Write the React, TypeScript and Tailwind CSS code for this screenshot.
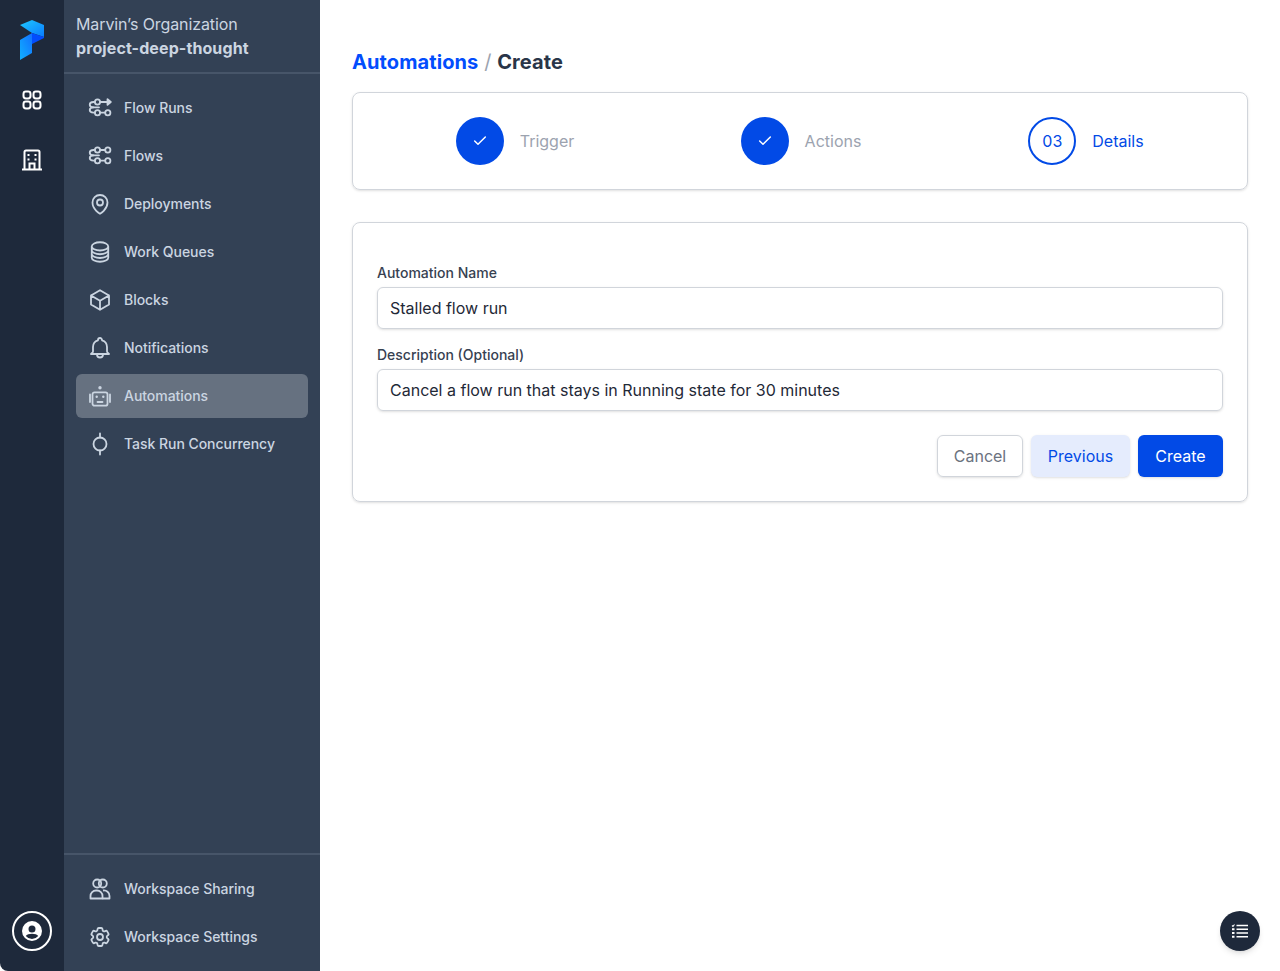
import { Check } from 'lucide-react'
import { HiOutlineCircleStack, HiOutlineCog6Tooth, HiOutlineCube, HiOutlineMapPin } from 'react-icons/hi2'
import { ReactNode } from 'react'

function FlowIcon({ arrow }: { arrow?: boolean }) {
  return (
    <svg viewBox="0 0 24 24" fill="none" stroke="currentColor" strokeWidth="1.800" strokeLinecap="round" strokeLinejoin="round" className="w-6 h-6">
      <circle cx="9.500" cy="6" r="2.600" />
      <circle cx="9.500" cy="16.700" r="2.600" />
      <circle cx="19.800" cy="16.700" r="2.600" />
      <path d="M12.100 16.700h5.100" />
      {arrow ? (
        <>
          <path d="M12.100 6h8" />
          <path d="M19.500 3.200 22.800 6l-3.300 2.800z" fill="currentColor" />
        </>
      ) : (
        <>
          <circle cx="19.800" cy="6" r="2.600" />
          <path d="M12.100 6h5.100" />
        </>
      )}
      <path d="M6.900 6H5.500a4 2.680 0 0 0 0 5.350h5.500" />
      <path d="M5.500 11.350a4 2.680 0 0 0 0 5.350h1.400" />
    </svg>
  )
}

function BellIcon() {
  return (
    <svg viewBox="0 0 24 24" fill="none" stroke="currentColor" strokeWidth="1.800" strokeLinecap="round" strokeLinejoin="round" className="w-6 h-6">
      <path d="M15 18h6l-1.400-1.400A2 2 0 0 1 19 15.200V11a7 7 0 0 0-5-6.660V4a2 2 0 1 0-4 0v.340A7 7 0 0 0 5 11v4.200c0 .540-.210 1.050-.600 1.400L3 18h12zm0 0v.500a3 3 0 1 1-6 0V18" />
    </svg>
  )
}

function BotIcon() {
  return (
    <svg viewBox="0 0 24 24" fill="none" stroke="currentColor" strokeWidth="1.800" strokeLinecap="round" className="w-6 h-6">
      <circle cx="12" cy="3.700" r="1.700" fill="currentColor" stroke="none" />
      <rect x="4.500" y="8.300" width="15" height="13.400" rx="2" />
      <path d="M2 10.500v7.500M22 10.500v7.500" />
      <circle cx="8.700" cy="12.700" r="1.200" fill="currentColor" stroke="none" />
      <circle cx="15.300" cy="12.700" r="1.200" fill="currentColor" stroke="none" />
      <path d="M9.500 18h5" />
    </svg>
  )
}

function ConcurrencyIcon() {
  return (
    <svg viewBox="0 0 24 24" fill="none" stroke="currentColor" strokeWidth="1.800" strokeLinecap="round" className="w-6 h-6">
      <circle cx="12" cy="12" r="6.500" />
      <path d="M12 1.500v4M12 18.500v4" />
    </svg>
  )
}

function SharingIcon() {
  return (
    <svg viewBox="0 0 24 24" fill="none" stroke="currentColor" strokeWidth="1.800" strokeLinejoin="round" className="w-6 h-6">
      <circle cx="9.200" cy="6.500" r="4" />
      <circle cx="14.800" cy="6.500" r="4" />
      <path d="M2.500 21.500V19A5.500 5.500 0 0 1 8 13.500h1A5.500 5.500 0 0 1 14.500 19v2.500z" />
      <path d="M15 13.500A5.500 5.500 0 0 1 21.500 19v2.500h-7" />
    </svg>
  )
}

function Logo() {
  return (
    <svg viewBox="0 0 24 40" className="w-6 h-10">
      <defs>
        <linearGradient id="logoTop" x1="0" y1="0" x2="1" y2="1">
          <stop offset="0" stopColor="#1ec8ff" />
          <stop offset="1" stopColor="#0a7cff" />
        </linearGradient>
        <linearGradient id="logoLeft" x1="0" y1="1" x2="1" y2="0">
          <stop offset="0" stopColor="#10b0ff" />
          <stop offset="1" stopColor="#1270ff" />
        </linearGradient>
      </defs>
      <polygon points="0,5 12,0 24,5 24,17 12,13" fill="url(#logoTop)" />
      <polygon points="0,20 12,13 12,33 0,40" fill="url(#logoLeft)" />
      <polygon points="12,13 24,17 24,18 12,24" fill="#024dfd" />
    </svg>
  )
}

function NavItem({ icon, label, active }: { icon: ReactNode; label: string; active?: boolean }) {
  return (
    <div className={`flex items-center h-11 px-3 gap-3 rounded-md text-sm font-medium tracking-[-0.04px] text-[#cbd5e1] ${active ? 'bg-[#667180]' : ''}`}>
      {icon}
      <span>{label}</span>
    </div>
  )
}

function Step({ label, done }: { label: string; done?: boolean }) {
  return (
    <div className="flex items-center gap-4">
      {done ? (
        <div className="w-12 h-12 rounded-full bg-[#024ae6] flex items-center justify-center text-white">
          <Check className="w-4 h-4" strokeWidth={2.200} />
        </div>
      ) : (
        <div className="w-12 h-12 rounded-full border-2 border-[#024ae6] flex items-center justify-center text-[#024ae6]">03</div>
      )}
      <span className={done ? 'text-[#9ca3af]' : 'text-[#024ae6]'}>{label}</span>
    </div>
  )
}

export default function App() {
  return (
    <div className="flex h-[971px] bg-white text-[#1f2937]" style={{ fontFamily: 'Inter, sans-serif' }}>
      {/* Icon rail */}
      <div className="w-16 shrink-0 bg-[#1e293b] rounded-bl-lg flex flex-col items-center pt-5 pb-5 text-white">
        <Logo />
        <svg viewBox="0 0 24 24" fill="none" stroke="currentColor" strokeWidth="2" className="w-6 h-6 mt-7">
          <rect x="3.500" y="3.500" width="7" height="7" rx="2.400" />
          <rect x="13.500" y="3.500" width="7" height="7" rx="2.400" />
          <rect x="3.500" y="13.500" width="7" height="7" rx="2.400" />
          <rect x="13.500" y="13.500" width="7" height="7" rx="2.400" />
        </svg>
        <svg viewBox="0 0 24 24" fill="none" stroke="currentColor" strokeWidth="2" className="w-6 h-6 mt-9">
          <path d="M4.500 21V4a1.500 1.500 0 0 1 1.500-1.500h12A1.500 1.500 0 0 1 19.500 4v17" />
          <path d="M2 21.500h20" />
          <path d="M9.500 21v-5.500h5V21" />
          <path d="M7.500 7h2M14.500 7h2M7.500 11.500h2M14.500 11.500h2" />
        </svg>
        <div className="mt-auto w-10 h-10 rounded-full border-2 border-white flex items-center justify-center">
          <svg viewBox="0 0 24 24" fill="currentColor" className="w-6 h-6">
            <path fillRule="evenodd" d="M12 2a10 10 0 1 0 0 20 10 10 0 0 0 0-20zm0 4.500a3.500 3.500 0 1 1 0 7 3.500 3.500 0 0 1 0-7zM12 20a8 8 0 0 1-6.200-3c.900-1.500 3.500-2.300 6.200-2.300s5.300.800 6.200 2.300A8 8 0 0 1 12 20z" />
          </svg>
        </div>
      </div>

      {/* Workspace sidebar */}
      <div className="w-64 shrink-0 bg-[#334155] flex flex-col">
        <div className="h-[74px] border-b-2 border-[#475569] px-3 pt-3 text-[#cbd5e1] leading-6">
          <div className="tracking-[-0.1px]">Marvin’s Organization</div>
          <div className="font-bold tracking-[0.1px]">project-deep-thought</div>
        </div>
        <div className="flex flex-col gap-1 px-3 pt-3">
          <NavItem icon={<FlowIcon arrow />} label="Flow Runs" />
          <NavItem icon={<FlowIcon />} label="Flows" />
          <NavItem icon={<HiOutlineMapPin className="w-6 h-6" strokeWidth={1.800} />} label="Deployments" />
          <NavItem icon={<HiOutlineCircleStack className="w-6 h-6" strokeWidth={1.800} />} label="Work Queues" />
          <NavItem icon={<HiOutlineCube className="w-6 h-6" strokeWidth={1.800} />} label="Blocks" />
          <NavItem icon={<BellIcon />} label="Notifications" />
          <NavItem icon={<BotIcon />} label="Automations" active />
          <NavItem icon={<ConcurrencyIcon />} label="Task Run Concurrency" />
        </div>
        <div className="mt-auto border-t-2 border-[#475569] flex flex-col gap-1 px-3 pt-3 pb-3">
          <NavItem icon={<SharingIcon />} label="Workspace Sharing" />
          <NavItem icon={<HiOutlineCog6Tooth className="w-6 h-6" strokeWidth={1.800} />} label="Workspace Settings" />
        </div>
      </div>

      {/* Main content */}
      <div className="flex-1 relative px-8 pt-12">
        <h1 className="text-xl font-bold tracking-[0.1px] leading-7 h-7 mb-[16px]">
          <span className="text-[#024dfd]">Automations</span>
          <span className="text-[#9ca3af] font-normal"> / </span>
          <span className="text-[#293548]">Create</span>
        </h1>

        <div className="h-[98px] border border-[#d1d5db] rounded-lg shadow-sm grid grid-cols-3 items-center px-[18px]">
          <div className="flex justify-center pl-[2px]"><Step label="Trigger" done /></div>
          <div className="flex justify-center pl-[2px]"><Step label="Actions" done /></div>
          <div className="flex justify-center"><Step label="Details" /></div>
        </div>

        <div className="mt-8 h-[280px] border border-[#d1d5db] rounded-lg shadow-sm px-6 pt-[40px]">
          <label className="block text-sm font-medium text-[#374151] leading-5 mb-1">Automation Name</label>
          <input readOnly value="Stalled flow run" className="block w-full h-[42px] px-3 border border-[#d1d5db] rounded-md shadow-sm outline-none text-[#1f2937]" />
          <label className="block mt-4 text-sm font-medium text-[#374151] leading-5 mb-1">Description (Optional)</label>
          <input readOnly value="Cancel a flow run that stays in Running state for 30 minutes" className="block w-full h-[42px] px-3 border border-[#d1d5db] rounded-md shadow-sm outline-none text-[#1f2937]" />
          <div className="flex justify-end gap-2 mt-6">
            <button className="h-[42px] w-[86px] border border-[#d1d5db] rounded-md shadow-sm text-[#6b7280]">Cancel</button>
            <button className="h-[42px] w-[99px] rounded-md shadow-sm bg-[#e5ecfd] text-[#024ae6]">Previous</button>
            <button className="h-[42px] w-[85px] rounded-md shadow-sm bg-[#024ae6] text-white">Create</button>
          </div>
        </div>

        <div className="absolute right-5 bottom-5 w-10 h-10 rounded-full bg-[#1e293b] shadow-md flex items-center justify-center text-white">
          <svg viewBox="0 0 20 20" fill="none" stroke="currentColor" strokeWidth="1.600" className="w-5 h-5">
            <path d="M6.500 4.500H18M6.500 8.300H18M6.500 12H18M6.500 15.700H18" />
            <path d="M2 4.500l1 1 1.500-2" strokeWidth="1.100" />
            <path d="M2 8.300h2.500M2 12h2.500M2 15.700h2.500" strokeWidth="2" />
          </svg>
        </div>
      </div>
    </div>
  )
}
